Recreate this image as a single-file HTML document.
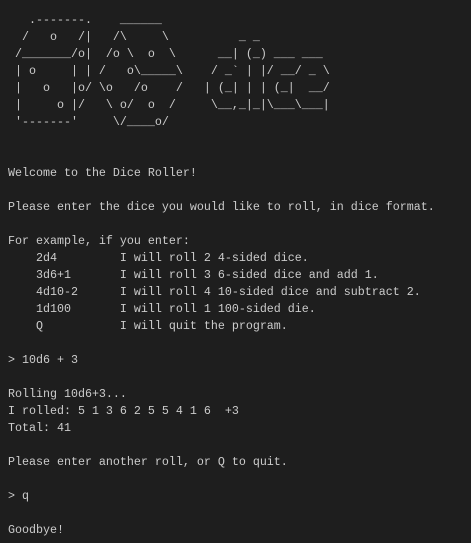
<!DOCTYPE html>
<html><head><meta charset="utf-8"><style>
html,body{margin:0;padding:0;background:#1e1e1e;}
body{width:471px;height:543px;overflow:hidden;}
pre{margin:0;padding:12px 0 0 8px;font-family:"Liberation Mono",monospace;font-size:11.67px;line-height:17px;color:#cccccc;white-space:pre;}
</style></head><body><pre>   .-------.    ______
  /   o   /|   /\     \          _ _
 /_______/o|  /o \  o  \      __| (_) ___ ___
 | o     | | /   o\_____\    / _` | |/ __/ _ \
 |   o   |o/ \o   /o    /   | (_| | | (_|  __/
 |     o |/   \ o/  o  /     \__,_|_|\___\___|
 '-------'     \/____o/


Welcome to the Dice Roller!

Please enter the dice you would like to roll, in dice format.

For example, if you enter:
    2d4         I will roll 2 4-sided dice.
    3d6+1       I will roll 3 6-sided dice and add 1.
    4d10-2      I will roll 4 10-sided dice and subtract 2.
    1d100       I will roll 1 100-sided die.
    Q           I will quit the program.

&gt; 10d6 + 3

Rolling 10d6+3...
I rolled: 5 1 3 6 2 5 5 4 1 6  +3
Total: 41

Please enter another roll, or Q to quit.

&gt; q

Goodbye!</pre></body></html>
